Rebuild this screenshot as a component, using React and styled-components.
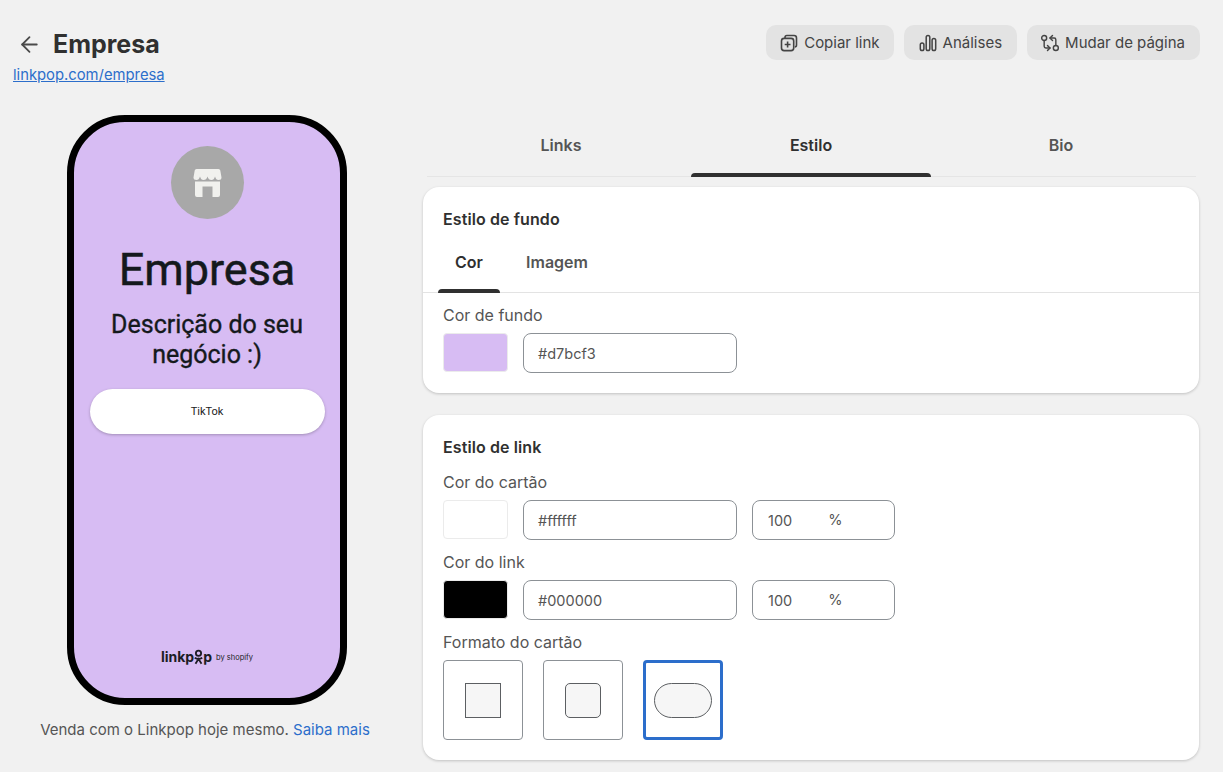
import styled, { createGlobalStyle } from "styled-components";
import { ArrowLeft, GitCompareArrows } from "lucide-react";

const GlobalStyle = createGlobalStyle`
html, body {
    margin: 0;
    background: #f1f1f1;
    font-family: Inter, "Liberation Sans", sans-serif;
    color: #303030;
}
* { box-sizing: border-box; }
`;

const Page = styled.div`
display: flex;
flex-direction: column;
width: 1223px;
height: 772px;
overflow: hidden;
`;

const Header = styled.header`
display: flex;
justify-content: space-between;
height: 115px;
padding: 25px 23px 0 13px;
`;

const TitleBlock = styled.div`
display: flex;
flex-direction: column;
`;

const TitleRow = styled.div`
display: flex;
align-items: center;
gap: 11px;
height: 38px;
padding-left: 4px;
color: #4a4a4a;
`;

const Title = styled.h1`
margin: 0;
font-size: 25px;
line-height: 38px;
font-weight: 700;
color: #303030;
`;

const PageLink = styled.a`
font-size: 14.800px;
line-height: 24px;
color: #2c6ecb;
text-decoration: underline;
`;

const Actions = styled.div`
display: flex;
gap: 10px;
`;

const ActionButton = styled.button`
display: flex;
align-items: center;
gap: ${(props) => props.$gap || 6}px;
height: 35px;
padding: 0 ${(props) => props.$right || 15}px 0 ${(props) => props.$left || 14}px;
border: none;
border-radius: 10px;
background: #e3e3e3;
color: #444;
font-family: inherit;
font-size: 15px;
`;

const Main = styled.main`
display: flex;
`;

const PreviewColumn = styled.section`
display: flex;
flex-direction: column;
align-items: center;
width: 414px;
`;

const Phone = styled.div`
display: flex;
flex-direction: column;
align-items: center;
width: 280px;
height: 590px;
padding: 24px 16px 0;
border: 7px solid #000;
border-radius: 58px;
background: #d7bcf3;
font-family: Roboto, sans-serif;
color: #14191c;
`;

const Avatar = styled.div`
display: flex;
align-items: center;
justify-content: center;
flex-shrink: 0;
width: 73px;
height: 73px;
border-radius: 50%;
background: #a8a8a8;
`;

const PhoneTitle = styled.div`
margin-top: 23px;
font-size: 45px;
line-height: 56px;
font-weight: 400;
-webkit-text-stroke: 0.5px #14191c;
`;

const PhoneDescription = styled.div`
margin-top: 12px;
width: 220px;
font-size: 25px;
line-height: 30px;
font-weight: 400;
text-align: center;
-webkit-text-stroke: 0.35px #14191c;
`;

const PhoneLink = styled.div`
display: flex;
align-items: center;
justify-content: center;
flex-shrink: 0;
width: 235px;
height: 45px;
margin-top: 19px;
border-radius: 23px;
background: #fff;
box-shadow: 0 1px 3px rgba(0, 0, 0, 0.25);
font-size: 11px;
color: #222;
`;

const PhoneFooter = styled.div`
display: flex;
align-items: center;
gap: 4px;
margin-top: auto;
margin-bottom: 32px;
font-family: Inter, sans-serif;
color: #1c1c24;
`;

const LogoWord = styled.span`
display: flex;
align-items: center;
font-size: 14px;
line-height: 16px;
font-weight: 700;
`;

const LogoBy = styled.span`
font-size: 7.500px;
line-height: 16px;
font-weight: 400;
padding-top: 2px;
`;

const Caption = styled.p`
margin: 16px 0 0;
font-size: 15px;
line-height: 18px;
color: #555;
transform: translateX(-2px);
`;

const CaptionLink = styled.a`
color: #2c6ecb;
`;

const SettingsColumn = styled.section`
display: flex;
flex-direction: column;
width: 776px;
margin-left: 9px;
`;

const Tabs = styled.nav`
display: flex;
gap: 10px;
height: 62px;
margin: 0 3px 0 4px;
padding: 0 14px;
border-bottom: 1px solid #e5e5e5;
`;

const Tab = styled.div`
position: relative;
display: flex;
align-items: center;
justify-content: center;
width: 240px;
height: 61px;
padding-bottom: 2px;
font-size: 16px;
font-weight: 600;
color: ${(props) => (props.$active ? "#303030" : "#555")};
${(props) => props.$active && `
&::after {
    content: "";
    position: absolute;
    left: 0;
    right: 0;
    bottom: -1px;
    height: 4px;
    border-radius: 4px 4px 0 0;
    background: #303030;
}
`}
`;

const Card = styled.div`
display: flex;
flex-direction: column;
margin-top: ${(props) => props.$top}px;
height: ${(props) => props.$height}px;
border-radius: 16px;
background: #fff;
box-shadow: 0 1px 3px rgba(0, 0, 0, 0.2);
`;

const CardTitle = styled.h2`
margin: 0;
padding: 22px 20px 0;
font-size: 16px;
line-height: 21px;
font-weight: 600;
letter-spacing: 0.1px;
color: #303030;
`;

const SubTabs = styled.div`
display: flex;
height: 53px;
margin-top: 10px;
padding: 0 15px;
border-bottom: 1px solid #e3e3e3;
`;

const SubTab = styled.div`
position: relative;
display: flex;
align-items: center;
justify-content: center;
width: ${(props) => props.$width}px;
margin-left: ${(props) => props.$left || 0}px;
height: 52px;
padding-bottom: 9px;
font-size: 16px;
font-weight: 600;
color: ${(props) => (props.$active ? "#303030" : "#555")};
${(props) => props.$active && `
&::after {
    content: "";
    position: absolute;
    left: 0;
    right: 0;
    bottom: -1px;
    height: 4px;
    border-radius: 4px 4px 0 0;
    background: #303030;
}
`}
`;

const Section = styled.div`
display: flex;
flex-direction: column;
padding: ${(props) => props.$top}px 20px 0;
`;

const Label = styled.div`
height: 22px;
margin-top: ${(props) => props.$top || 0}px;
font-size: 16px;
line-height: 22px;
color: #555;
`;

const FieldRow = styled.div`
display: flex;
gap: 15px;
margin-top: 7px;
`;

const Swatch = styled.div`
width: 65px;
height: 39px;
border: 1px solid #ebebeb;
border-radius: 4px;
background: ${(props) => props.$color};
`;

const TextField = styled.div`
display: flex;
align-items: center;
width: ${(props) => props.$width}px;
height: 40px;
padding-left: ${(props) => props.$inset || 14}px;
border: 1px solid #8c9196;
border-radius: 8px;
background: #fff;
font-size: 14.500px;
color: #555;
`;

const Percent = styled.span`
margin-left: 36px;
margin-top: -2px;
`;

const ShapeRow = styled.div`
display: flex;
gap: 20px;
margin-top: 7px;
`;

const ShapeOption = styled.div`
display: flex;
align-items: center;
justify-content: center;
width: 80px;
height: 80px;
border: ${(props) => (props.$selected ? "3px solid #2c6ecb" : "1px solid #8c9196")};
border-radius: 4px;
background: #fff;
`;

const ShapeSample = styled.div`
width: ${(props) => props.$width}px;
height: 35px;
border: 1px solid #5c5f62;
border-radius: ${(props) => props.$radius}px;
background: #f6f6f6;
`;

const CopyIcon = () => (
    <svg width="18" height="18" viewBox="0 0 18 18" fill="none" stroke="currentColor" strokeWidth="1.6">
        <path d="M5 4.2V3.4C5 2.3 5.8 1.5 6.9 1.5h7.2c1.3 0 2.4 1.1 2.4 2.4v7.2c0 1.1-.7 1.9-1.7 1.9" />
        <rect x="1.5" y="4.4" width="12.2" height="12.2" rx="2.6" />
        <path d="M7.6 7.6v5.8M4.7 10.5h5.8" />
    </svg>
);

const BarsIcon = () => (
    <svg width="18" height="18" viewBox="0 0 18 18" fill="none" stroke="currentColor" strokeWidth="1.5">
        <rect x="1.3" y="9" width="3.6" height="7.500" rx="1.8" />
        <rect x="7.2" y="1.5" width="3.6" height="15" rx="1.8" />
        <rect x="13.1" y="4.500" width="3.6" height="12" rx="1.8" />
    </svg>
);

const StoreIcon = () => (
    <svg width="28" height="28" viewBox="-0.5 0 28 28" overflow="visible">
        <path
            fill="#f1f1ee"
            d="M3 0H25Q26.500 0 26.800 1.500L28 8.500Q28 11 25 11Q22.500 11 21.500 7.500Q20.500 11 18 11Q15 11 14 7.500Q13 11 10 11Q7.500 11 6.500 7.500Q5.500 11 3 11Q0 11 0 8.500L1.200 1.500Q1.500 0 3 0Z"
        />
        <path
            fill="#f1f1ee"
            d="M1.500 12.500H26.500V26Q26.500 28 24.500 28H19V17.500H9V28H3.500Q1.500 28 1.500 26Z"
        />
    </svg>
);

const LogoFigure = () => (
    <svg width="9" height="16" viewBox="0 0 12 20" fill="none" stroke="currentColor" strokeWidth="2.400">
        <circle cx="6" cy="5" r="3.500" />
        <path d="M1 11c1.500 1 3 1.500 5 1.500s3.500-.5 5-1.500M2 19l4-6.500 4 6.500" />
    </svg>
);

const App = () => {
    return (
        <Page>
            <GlobalStyle />
            <Header>
                <TitleBlock>
                    <TitleRow>
                        <ArrowLeft size={25} strokeWidth={1.7} />
                        <Title>Empresa</Title>
                    </TitleRow>
                    <PageLink href="#">linkpop.com/empresa</PageLink>
                </TitleBlock>
                <Actions>
                    <ActionButton $right={14}><CopyIcon />Copiar link</ActionButton>
                    <ActionButton $left={15}><BarsIcon />Análises</ActionButton>
                    <ActionButton $left={13} $gap={5}><GitCompareArrows size={20} strokeWidth={1.7} />Mudar de página</ActionButton>
                </Actions>
            </Header>
            <Main>
                <PreviewColumn>
                    <Phone>
                        <Avatar><StoreIcon /></Avatar>
                        <PhoneTitle>Empresa</PhoneTitle>
                        <PhoneDescription>Descrição do seu negócio :)</PhoneDescription>
                        <PhoneLink>TikTok</PhoneLink>
                        <PhoneFooter>
                            <LogoWord>linkp<LogoFigure />p</LogoWord>
                            <LogoBy>by shopify</LogoBy>
                        </PhoneFooter>
                    </Phone>
                    <Caption>Venda com o Linkpop hoje mesmo. <CaptionLink>Saiba mais</CaptionLink></Caption>
                </PreviewColumn>
                <SettingsColumn>
                    <Tabs>
                        <Tab>Links</Tab>
                        <Tab $active>Estilo</Tab>
                        <Tab>Bio</Tab>
                    </Tabs>
                    <Card $top={10} $height={206}>
                        <CardTitle>Estilo de fundo</CardTitle>
                        <SubTabs>
                            <SubTab $active $width={62}>Cor</SubTab>
                            <SubTab $width={88} $left={13}>Imagem</SubTab>
                        </SubTabs>
                        <Section $top={11}>
                            <Label>Cor de fundo</Label>
                            <FieldRow>
                                <Swatch $color="#d7bcf3" />
                                <TextField $width={214}>#d7bcf3</TextField>
                            </FieldRow>
                        </Section>
                    </Card>
                    <Card $top={22} $height={345}>
                        <CardTitle>Estilo de link</CardTitle>
                        <Section $top={13}>
                            <Label>Cor do cartão</Label>
                            <FieldRow>
                                <Swatch $color="#ffffff" />
                                <TextField $width={214}>#ffffff</TextField>
                                <TextField $width={143} $inset={15}>100<Percent>%</Percent></TextField>
                            </FieldRow>
                            <Label $top={11}>Cor do link</Label>
                            <FieldRow>
                                <Swatch $color="#000000" />
                                <TextField $width={214}>#000000</TextField>
                                <TextField $width={143} $inset={15}>100<Percent>%</Percent></TextField>
                            </FieldRow>
                            <Label $top={11}>Formato do cartão</Label>
                            <ShapeRow>
                                <ShapeOption><ShapeSample $width={36} $radius={0} /></ShapeOption>
                                <ShapeOption><ShapeSample $width={36} $radius={5} /></ShapeOption>
                                <ShapeOption $selected><ShapeSample $width={58} $radius={18} /></ShapeOption>
                            </ShapeRow>
                        </Section>
                    </Card>
                </SettingsColumn>
            </Main>
        </Page>
    );
};

export default App;
